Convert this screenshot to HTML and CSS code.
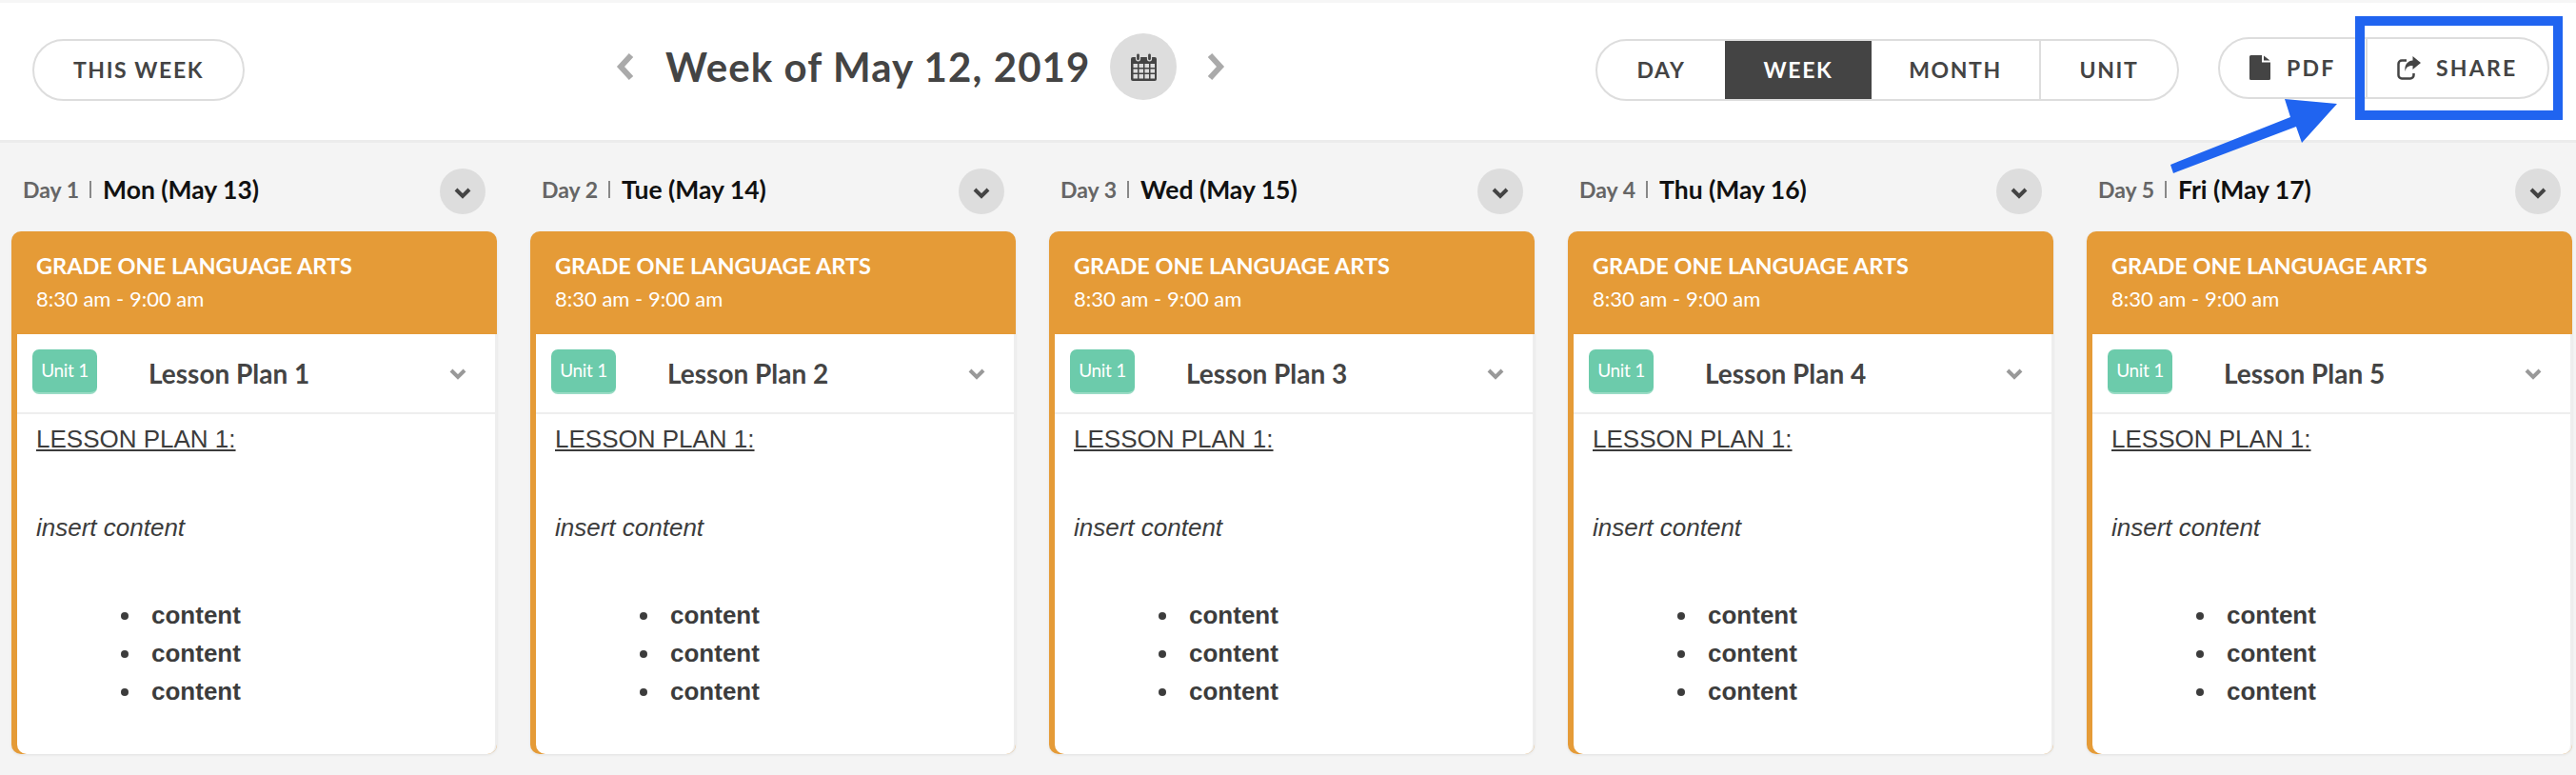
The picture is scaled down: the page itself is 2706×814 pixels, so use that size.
FILE: index.html
```html
<!DOCTYPE html>
<html lang="en">
<head>
<meta charset="utf-8">
<title>Week of May 12, 2019</title>
<link rel="stylesheet" href="styles.css">
</head>
<body>
<header class="topbar">
  <button class="pill this-week">THIS WEEK</button>
  <div class="week-nav">
    <svg class="nav-chev" viewBox="0 0 20 30"><polyline points="16,3 5,15 16,27"/></svg>
    <h1 class="week-title">Week of May 12, 2019</h1>
    <span class="cal-btn">
      <svg class="cal-icon" viewBox="0 0 27 30">
        <path class="cal-body" d="M2 5h23a2 2 0 0 1 2 2v21a2 2 0 0 1-2 2H2a2 2 0 0 1-2-2V7a2 2 0 0 1 2-2z"/>
        <path class="cal-cells" d="M2.500 12h4.500v4h-4.500zM8.500 12h4.500v4h-4.500zM14.500 12h4.500v4h-4.500zM20.500 12h4.500v4h-4.500zM2.500 17.500h4.500v4h-4.500zM8.500 17.500h4.500v4h-4.500zM14.500 17.500h4.500v4h-4.500zM20.500 17.500h4.500v4h-4.500zM2.500 23h4.500v4.500h-4.500zM8.500 23h4.500v4.500h-4.500zM14.500 23h4.500v4.500h-4.500zM20.500 23h4.500v4.500h-4.500z"/>
        <rect class="cal-ring" x="5.500" y="0.800" width="4" height="8" rx="2"/>
        <rect class="cal-ring" x="17.500" y="0.800" width="4" height="8" rx="2"/>
      </svg>
    </span>
    <svg class="nav-chev nav-next" viewBox="0 0 20 30"><polyline points="4,3 15,15 4,27"/></svg>
  </div>
  <div class="views">
    <span class="view view-day">DAY</span>
    <span class="view view-week">WEEK</span>
    <span class="view view-month">MONTH</span>
    <span class="view view-unit">UNIT</span>
  </div>
  <div class="export">
    <span class="export-item export-pdf">
      <svg class="pdf-icon" viewBox="0 0 22 26"><path d="M1.500 0H13v7.500h9V24.500a1.500 1.500 0 0 1-1.500 1.500h-19A1.500 1.500 0 0 1 0 24.500V1.500A1.500 1.500 0 0 1 1.500 0zM15 0.500l6.500 5H15z"/></svg>
      PDF
    </span>
    <span class="export-item export-share">
      <svg class="share-icon" viewBox="0 0 25 26">
        <path class="share-box" d="M10 5.500H5a3.500 3.500 0 0 0-3.500 3.500v12A3.500 3.500 0 0 0 5 24.500h9a3.500 3.500 0 0 0 3.500-3.500v-2"/>
        <path class="share-arrow" d="M16.500 1L25 8l-8.500 7v-4C12 11 9.500 12.500 8.500 17 7.500 10 11 6 16.500 5.500z"/>
      </svg>
      SHARE
    </span>
  </div>
</header>

<main class="board">
  <section class="day">
    <div class="day-head">
      <span class="day-num">Day 1</span><span class="day-sep"></span><span class="day-date">Mon (May 13)</span>
      <span class="day-toggle"><svg class="toggle-chev" viewBox="0 0 18 12"><polyline points="2,2 9,9 16,2"/></svg></span>
    </div>
    <article class="card">
      <div class="card-head"><div class="card-title">GRADE ONE LANGUAGE ARTS</div><div class="card-time">8:30 am - 9:00 am</div></div>
      <div class="card-body">
        <div class="lesson-row"><span class="unit">Unit 1</span><span class="lesson-name">Lesson Plan 1</span><svg class="lesson-chev" viewBox="0 0 18 12"><polyline points="2,2 9,9 16,2"/></svg></div>
        <div class="lesson-text"><p class="lt-head">LESSON PLAN 1:</p><p>&nbsp;</p><p class="lt-em">insert content</p><ul><li>content</li><li>content</li><li>content</li></ul></div>
      </div>
    </article>
  </section>
  <section class="day">
    <div class="day-head">
      <span class="day-num">Day 2</span><span class="day-sep"></span><span class="day-date">Tue (May 14)</span>
      <span class="day-toggle"><svg class="toggle-chev" viewBox="0 0 18 12"><polyline points="2,2 9,9 16,2"/></svg></span>
    </div>
    <article class="card">
      <div class="card-head"><div class="card-title">GRADE ONE LANGUAGE ARTS</div><div class="card-time">8:30 am - 9:00 am</div></div>
      <div class="card-body">
        <div class="lesson-row"><span class="unit">Unit 1</span><span class="lesson-name">Lesson Plan 2</span><svg class="lesson-chev" viewBox="0 0 18 12"><polyline points="2,2 9,9 16,2"/></svg></div>
        <div class="lesson-text"><p class="lt-head">LESSON PLAN 1:</p><p>&nbsp;</p><p class="lt-em">insert content</p><ul><li>content</li><li>content</li><li>content</li></ul></div>
      </div>
    </article>
  </section>
  <section class="day">
    <div class="day-head">
      <span class="day-num">Day 3</span><span class="day-sep"></span><span class="day-date">Wed (May 15)</span>
      <span class="day-toggle"><svg class="toggle-chev" viewBox="0 0 18 12"><polyline points="2,2 9,9 16,2"/></svg></span>
    </div>
    <article class="card">
      <div class="card-head"><div class="card-title">GRADE ONE LANGUAGE ARTS</div><div class="card-time">8:30 am - 9:00 am</div></div>
      <div class="card-body">
        <div class="lesson-row"><span class="unit">Unit 1</span><span class="lesson-name">Lesson Plan 3</span><svg class="lesson-chev" viewBox="0 0 18 12"><polyline points="2,2 9,9 16,2"/></svg></div>
        <div class="lesson-text"><p class="lt-head">LESSON PLAN 1:</p><p>&nbsp;</p><p class="lt-em">insert content</p><ul><li>content</li><li>content</li><li>content</li></ul></div>
      </div>
    </article>
  </section>
  <section class="day">
    <div class="day-head">
      <span class="day-num">Day 4</span><span class="day-sep"></span><span class="day-date">Thu (May 16)</span>
      <span class="day-toggle"><svg class="toggle-chev" viewBox="0 0 18 12"><polyline points="2,2 9,9 16,2"/></svg></span>
    </div>
    <article class="card">
      <div class="card-head"><div class="card-title">GRADE ONE LANGUAGE ARTS</div><div class="card-time">8:30 am - 9:00 am</div></div>
      <div class="card-body">
        <div class="lesson-row"><span class="unit">Unit 1</span><span class="lesson-name">Lesson Plan 4</span><svg class="lesson-chev" viewBox="0 0 18 12"><polyline points="2,2 9,9 16,2"/></svg></div>
        <div class="lesson-text"><p class="lt-head">LESSON PLAN 1:</p><p>&nbsp;</p><p class="lt-em">insert content</p><ul><li>content</li><li>content</li><li>content</li></ul></div>
      </div>
    </article>
  </section>
  <section class="day">
    <div class="day-head">
      <span class="day-num">Day 5</span><span class="day-sep"></span><span class="day-date">Fri (May 17)</span>
      <span class="day-toggle"><svg class="toggle-chev" viewBox="0 0 18 12"><polyline points="2,2 9,9 16,2"/></svg></span>
    </div>
    <article class="card">
      <div class="card-head"><div class="card-title">GRADE ONE LANGUAGE ARTS</div><div class="card-time">8:30 am - 9:00 am</div></div>
      <div class="card-body">
        <div class="lesson-row"><span class="unit">Unit 1</span><span class="lesson-name">Lesson Plan 5</span><svg class="lesson-chev" viewBox="0 0 18 12"><polyline points="2,2 9,9 16,2"/></svg></div>
        <div class="lesson-text"><p class="lt-head">LESSON PLAN 1:</p><p>&nbsp;</p><p class="lt-em">insert content</p><ul><li>content</li><li>content</li><li>content</li></ul></div>
      </div>
    </article>
  </section>
</main>

<div class="callout-box"></div>
<svg class="callout-arrow" viewBox="0 0 200 100"><polygon points="5,72 131,22 125,3 180,8 143,49 137,32 8,81"/></svg>
</body>
</html>
```

FILE: styles.css
```css
* { box-sizing: border-box; }
html, body { margin: 0; padding: 0; }
body {
  position: relative;
  width: 2706px;
  height: 814px;
  overflow: hidden;
  background: #f4f4f4;
  font-family: Lato, "Liberation Sans", sans-serif;
  color: #444;
}
.topbar {
  display: flex;
  align-items: flex-start;
  height: 150px;
  padding: 38px 0 0 34px;
  background: #fff;
  border-top: 3px solid #f6f6f6;
  border-bottom: 3px solid #ececec;
}
.pill {
  width: 223px;
  height: 65px;
  padding: 0 0 2px;
  background: #fff;
  border: 2px solid #ddd;
  border-radius: 33px;
  font-family: inherit;
  font-size: 23px;
  font-weight: 700;
  letter-spacing: 1.6px;
  color: #444;
}
.week-nav {
  display: flex;
  align-items: center;
  height: 70px;
  margin: -6px 0 0 390px;
}
.nav-chev { width: 20px; height: 30px; }
.nav-chev polyline { fill: none; stroke: #aaa; stroke-width: 6; }
.nav-next { margin-left: 31px; }
.week-title {
  width: 467px;
  margin: 0 0 0 32px;
  font-size: 42px;
  font-weight: 700;
  letter-spacing: 1.1px;
  white-space: nowrap;
  color: #444;
}
.cal-btn {
  display: flex;
  align-items: center;
  justify-content: center;
  width: 70px;
  height: 70px;
  border-radius: 50%;
  background: #ddd;
}
.cal-icon { width: 27px; height: 30px; }
.cal-body { fill: #444; }
.cal-cells { fill: #ddd; }
.cal-ring { fill: #444; stroke: #ddd; stroke-width: 1.200; }
.views {
  display: flex;
  align-items: stretch;
  width: 613px;
  height: 65px;
  margin-left: 389px;
  background: #fff;
  border: 2px solid #ddd;
  border-radius: 33px;
  font-size: 23px;
  font-weight: 700;
  letter-spacing: 1.6px;
  overflow: hidden;
}
.view { display: flex; align-items: center; justify-content: center; padding-bottom: 2px; }
.view-day { width: 134px; }
.view-week { width: 154px; margin-block: -2px; background: #444; color: #fff; }
.view-month { width: 178px; border-right: 2px solid #ddd; }
.view-unit { flex: 1; }
.export {
  display: flex;
  width: 348px;
  height: 65px;
  margin: -2px 0 0 41px;
  background: #fff;
  border: 2px solid #ddd;
  border-radius: 33px;
  font-size: 23px;
  font-weight: 700;
  letter-spacing: 2.2px;
}
.export-item { display: flex; align-items: center; padding-bottom: 2px; }
.export-pdf { width: 155px; padding-left: 31px; border-right: 2px solid #ddd; }
.export-share { flex: 1; padding-left: 31px; }
.pdf-icon { width: 22px; height: 26px; margin-right: 17px; fill: #444; }
.share-icon { width: 25px; height: 26px; margin-right: 16px; }
.share-box { fill: none; stroke: #444; stroke-width: 2.500; }
.share-arrow { fill: #444; }
.board {
  display: flex;
  gap: 35px;
  padding-left: 12px;
}
.day { width: 510px; }
.day-head {
  display: flex;
  align-items: center;
  height: 48px;
  margin-top: 27px;
  margin-bottom: 18px;
  padding: 0 12px;
  white-space: nowrap;
}
.day-num { margin-bottom: 5px; font-size: 23px; font-weight: 700; color: #666; }
.day-sep { width: 2px; height: 18px; margin: 0 12px 4px 11px; background: #888; }
.day-date { margin-bottom: 5px; font-size: 26.500px; font-weight: 700; color: #111; }
.day-toggle {
  display: flex;
  align-items: center;
  justify-content: center;
  width: 48px;
  height: 48px;
  margin-left: auto;
  border-radius: 50%;
  background: #ddd;
}
.toggle-chev { width: 18px; height: 12px; margin-top: 4px; }
.toggle-chev polyline { fill: none; stroke: #444; stroke-width: 4; }
.card {
  height: 549px;
  border-radius: 10px;
  background: #e59b37;
  box-shadow: 0 1px 3px rgba(0, 0, 0, 0.08);
}
.card-head {
  height: 108px;
  padding: 20px 0 0 26px;
  color: #fff;
}
.card-title {
  font-size: 23.500px;
  font-weight: 700;
  line-height: 32px;
  white-space: nowrap;
}
.card-time {
  margin-top: 3px;
  font-size: 22px;
  line-height: 32px;
}
.card-body {
  height: 441px;
  margin-left: 6px;
  background: #fff;
  border-right: 2px solid #eee;
  border-radius: 0 0 10px 10px;
}
.lesson-row {
  display: flex;
  align-items: flex-start;
  height: 84px;
  padding: 16px 0 0 16px;
  border-bottom: 2px solid #eee;
}
.unit {
  display: flex;
  align-items: center;
  justify-content: center;
  width: 68px;
  height: 47px;
  padding-bottom: 2px;
  border-radius: 7px;
  background: #6ccbab;
  border-bottom: 2px solid #9adcc5;
  color: #fff;
  font-size: 19px;
  letter-spacing: -0.3px;
}
.lesson-name {
  margin: 3px 0 0 54px;
  font-size: 28px;
  font-weight: 700;
  line-height: 44px;
  color: #444;
}
.lesson-chev { width: 18px; height: 12px; margin: 20px 0 0 147px; }
.lesson-chev polyline { fill: none; stroke: #999; stroke-width: 4; }
.lesson-text {
  padding: 3px 0 0 20px;
  font-family: "Liberation Sans", Arial, sans-serif;
  font-size: 26px;
  line-height: 46.500px;
  color: #3c3c3c;
}
.lesson-text p { margin: 0; }
.lt-head { text-decoration: underline; }
.lt-em { font-style: italic; }
.lesson-text ul {
  margin: 48px 0 0;
  padding: 0 0 0 112px;
  font-weight: 700;
  line-height: 40px;
}
.lesson-text li { padding-left: 9px; }
.callout-box {
  position: absolute;
  left: 2474px;
  top: 17px;
  width: 218px;
  height: 109px;
  border: 10px solid #2064f0;
}
.callout-arrow {
  position: absolute;
  left: 2275px;
  top: 101px;
  width: 200px;
  height: 100px;
  fill: #2064f0;
}
```
